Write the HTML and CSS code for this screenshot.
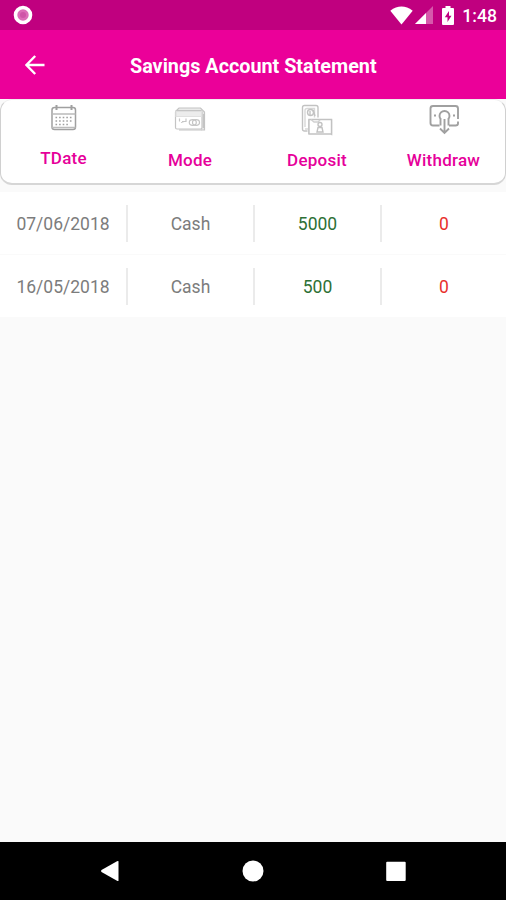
FILE: index.html
```html
<!DOCTYPE html>
<html lang="en">
<head>
<meta charset="utf-8">
<title>Savings Account Statement</title>
<link rel="stylesheet" href="styles.css">
</head>
<body>
  <div class="statusbar">
    <svg class="record" width="20" height="20" viewBox="0 0 20 20">
      <circle cx="10" cy="10" r="7.5" fill="#dc6db8" stroke="#fff" stroke-width="3.6"/>
      <circle cx="10" cy="10" r="3" fill="#cf55a8"/>
    </svg>
    <div class="status-right">
      <svg class="wifi" width="23" height="19" viewBox="0 0 23 19"><path d="M0.3 4.7Q11.5-3.6 22.7 4.7L11.5 18.5z" fill="#fff"/></svg>
      <svg class="signal" width="18" height="18" viewBox="0 0 18 18"><path d="M0 18L18 0V18z" fill="#fff" opacity=".35"/><path d="M0 18L11 7V18z" fill="#fff"/></svg>
      <svg class="battery" width="12" height="19" viewBox="0 0 12 19"><path d="M3.5 0h5v2H11q1 0 1 1v15q0 1-1 1H1q-1 0-1-1V3q0-1 1-1h2.5z" fill="#fff"/><path d="M7 5L2.8 11.2h2.7V16l4-6.3H7z" fill="#c0007f"/></svg>
      <span class="clock">1:48</span>
    </div>
  </div>

  <div class="toolbar">
    <svg class="back" width="20" height="20" viewBox="0 0 20 20"><path d="M19.5 10H1.5M10.2 1L1.4 10L10.2 19" fill="none" stroke="#fff" stroke-width="2.4"/></svg>
    <h1>Savings Account Statement</h1>
  </div>

  <div class="columns">
    <div class="column tdate">
      <svg width="32" height="32" viewBox="0 0 32 32" fill="none" stroke="#a0a0a0" stroke-width="1.5">
        <rect x="4" y="3.500" width="23.500" height="22" rx="2.500"/>
        <path d="M4 10h23.500M4 23.500h23.500" stroke="#bbb"/>
        <path d="M8.500 1v5M23.500 1v5" stroke-width="2"/>
        <path d="M7.500 13.500h17M7.500 17h17M7.500 20.500h14" stroke-width="1.600" stroke-dasharray="1.600 2"/>
      </svg>
      <span>TDate</span>
    </div>
    <div class="column">
      <svg width="32" height="32" viewBox="0 0 32 32" fill="none" stroke="#c4c4c4" stroke-width="1.200">
        <path d="M2 7L5 4h21.500L30.500 8v18h-3" fill="#eaeaea"/>
        <rect x="1.500" y="6.500" width="26.500" height="18.500" rx="1.500" fill="#fff"/>
        <path d="M2 7.500h25.500v5H2z" fill="#ececec" stroke="#e0e0e0"/>
        <path d="M29.500 10v14M28 26h-23"/>
        <path d="M5.500 14.500v3M7 18.500l3-1M12 14.500v3h-4" stroke="#c6c6c6"/>
        <ellipse cx="18.800" cy="18.500" rx="3.500" ry="2.800"/>
        <ellipse cx="22" cy="18.500" rx="3.500" ry="2.800"/>
      </svg>
      <span>Mode</span>
    </div>
    <div class="column">
      <svg width="32" height="32" viewBox="0 0 32 32" fill="none" stroke="#c2c2c2" stroke-width="1.400">
        <path d="M6.500 27h-3q-2 0-2-2V3.500q0-2 2-2h11.500q2 0 2 2v10"/>
        <path d="M4 23V6.500q0-2 2-2h7.500v9M4 25h3" stroke="#d8d8d8"/>
        <circle cx="9.500" cy="8.500" r="3"/>
        <path d="M9 7v4M12 6l2 6"/>
        <path d="M8 30V16h5l3 2M16 16h14.500v14z" fill="none"/>
        <path d="M8 30V15.500h22.500V30z" fill="#fff"/>
        <path d="M10 15.500l3 2.500h4l2-2" stroke="#d0d0d0"/>
        <circle cx="19" cy="20.500" r="2"/>
        <path d="M17 23.500h4l1 4.500h-6z"/>
      </svg>
      <span>Deposit</span>
    </div>
    <div class="column withdrawal">
      <svg width="32" height="32" viewBox="0 0 32 32" fill="none" stroke="#a0a0a0" stroke-width="1.900">
        <path d="M11.500 21.500H5q-2.500 0-2.500-2.500V4.500Q2.500 2 5 2h22.500Q30 2 30 4.500v10.500M30 17.500v2q0 2-2.500 2h-6.500"/>
        <path d="M13 15.500A5 5 0 1 1 20 15.500M12.500 15v6.500M20.500 15v6.500"/>
        <path d="M16.500 15v13.500M12 24.500l4.500 4.500l4.500-4.500"/>
        <path d="M6 11.500h2M25 11.500h2"/>
      </svg>
      <span>Withdraw</span>
    </div>
  </div>

  <div class="rows">
    <div class="row">
      <span>07/06/2018</span>
      <span>Cash</span>
      <span class="deposit">5000</span>
      <span class="withdraw">0</span>
    </div>
    <div class="row">
      <span>16/05/2018</span>
      <span>Cash</span>
      <span class="deposit">500</span>
      <span class="withdraw">0</span>
    </div>
  </div>

  <div class="navbar">
    <svg width="22" height="22" viewBox="0 0 22 22"><path d="M19.500 1.200V20.800Q19 21.300 18 20.800L2.500 12Q1.500 11 2.500 10L18 1.200Q19 .7 19.500 1.200z" fill="#fff"/></svg>
    <svg width="22" height="22" viewBox="0 0 22 22"><circle cx="11" cy="11" r="10.500" fill="#fff"/></svg>
    <svg width="22" height="22" viewBox="0 0 22 22"><rect x="1.200" y="1.700" width="19.500" height="19.300" rx="1" fill="#fff"/></svg>
  </div>
</body>
</html>
```
FILE: styles.css
```css
* {
    box-sizing: border-box;
}
body {
    margin: 0;
    height: 900px;
    display: flex;
    flex-direction: column;
    background: #fafafa;
    font-family: Roboto, "Liberation Sans", sans-serif;
}
svg {
    display: block;
    flex: none;
}
.statusbar {
    height: 30px;
    padding: 0 9px 0 13px;
    display: flex;
    align-items: center;
    justify-content: space-between;
    background: #c0007f;
}
.status-right {
    display: flex;
    align-items: center;
}
.signal {
    margin-left: 2px;
}
.battery {
    margin-left: 9px;
}
.clock {
    margin-left: 8px;
    color: #fff;
    font-size: 17.6px;
    font-weight: 500;
    line-height: 30px;
    padding-top: 1px;
}
.toolbar {
    height: 69px;
    padding: 0 0 0 25px;
    display: flex;
    align-items: center;
    background: #eb0099;
}
.toolbar h1 {
    margin: 4px 0 0 85px;
    color: #fff;
    font-size: 19.8px;
    font-weight: 700;
    line-height: 24px;
    white-space: nowrap;
}
.columns {
    height: 86px;
    display: grid;
    grid-template-columns: 125px 128px 126px 125px;
    background: #fff;
    border: 1px solid #d0d0d0;
    border-top-color: #eee;
    border-bottom: 2px solid #d6d6d6;
    border-radius: 12px;
}
.column {
    padding-top: 4px;
    display: flex;
    flex-direction: column;
    align-items: center;
    color: #e6009a;
    font-size: 17px;
    font-weight: 500;
    line-height: 20px;
    letter-spacing: .25px;
}
.column.withdrawal {
    padding-left: 2px;
}
.column span {
    margin-top: 14px;
}
.column.tdate span {
    margin-top: 12px;
}
.rows {
    margin-top: 7px;
}
.row {
    height: 62px;
    display: grid;
    grid-template-columns: 128px 127px 127px 124px;
    align-items: center;
    background: #fff;
}
.row + .row {
    margin-top: 1px;
}
.row span {
    height: 37px;
    color: #7c7c7c;
    font-size: 17.5px;
    line-height: 38px;
    text-align: center;
    border-right: 2px solid #ebebeb;
}
.row span:last-child {
    border-right: 0;
}
.row .deposit {
    color: #2d7035;
}
.row .withdraw {
    color: #e8302c;
}
.navbar {
    height: 58px;
    margin-top: auto;
    padding: 0 99px;
    display: flex;
    align-items: center;
    justify-content: space-between;
    background: #000;
}
```
